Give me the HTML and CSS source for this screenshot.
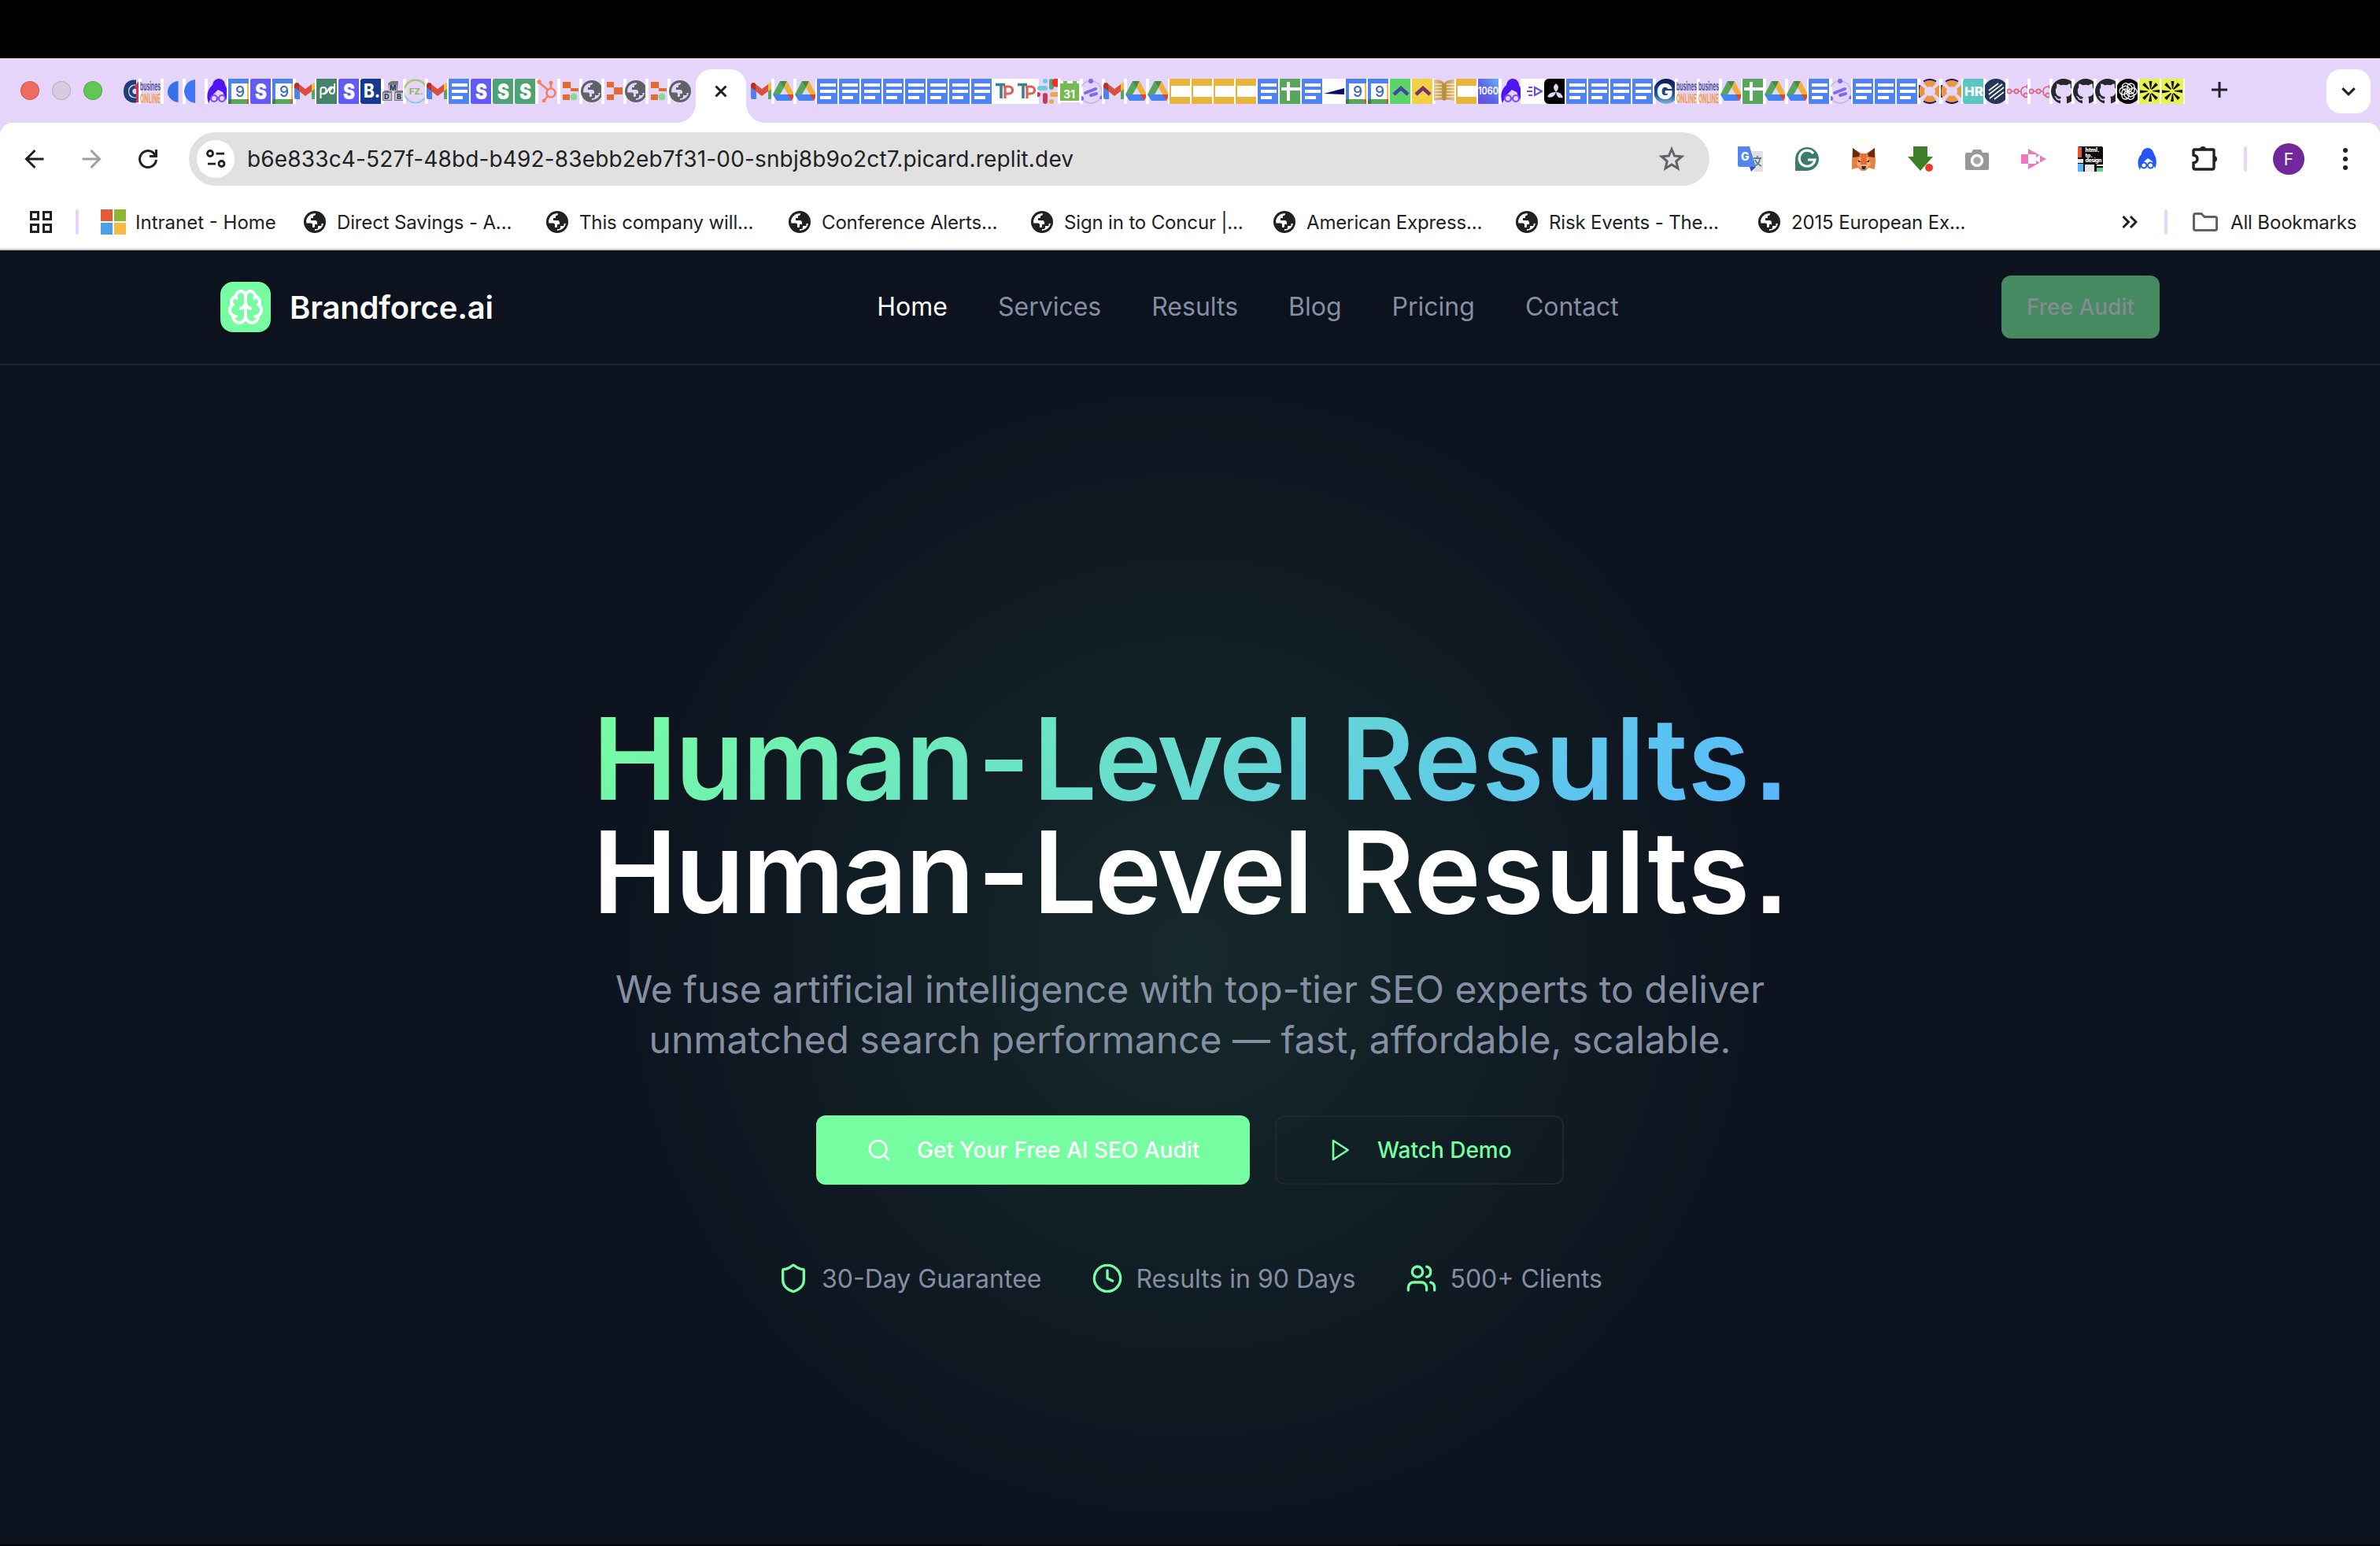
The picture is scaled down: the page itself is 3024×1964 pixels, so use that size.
FILE: index.html
```html
<!DOCTYPE html>
<html lang="en">
<head>
<meta charset="utf-8">
<title>Brandforce.ai</title>
<link rel="stylesheet" href="styles.css">
</head>
<body>
<svg class="paints" aria-hidden="true">
  <defs>
    <linearGradient id="g1060" x1="0" y1="1" x2="1" y2="0"><stop offset="0" stop-color="#6a4be0"/><stop offset=".5" stop-color="#5c68e8"/><stop offset="1" stop-color="#62b4f8"/></linearGradient>
    <linearGradient id="gGlobe" x1="0" y1="0" x2="0" y2="1"><stop offset="0" stop-color="#081c4e"/><stop offset=".6" stop-color="#1d4f93"/><stop offset="1" stop-color="#7fb6dd"/></linearGradient>
    <linearGradient id="gBook" x1="0" y1="0" x2="1" y2="0"><stop offset="0" stop-color="#e2c58e"/><stop offset=".5" stop-color="#b98a35"/><stop offset="1" stop-color="#e2c58e"/></linearGradient>
  </defs>
</svg>
<svg class="sprite" aria-hidden="true">
  <symbol id="c1" viewBox="0 0 32 32"><path d="M17 4.500h-4q-9 2-9 11.500t9 11.500h4" fill="none" stroke="#1d4078" stroke-width="6"/><path d="M18 11a5.500 5.500 0 1 0 0 10" fill="none" stroke="#1d4078" stroke-width="4"/><path d="M15 10l6-8v28h-4V14z" fill="#d8304b"/></symbol>
  <symbol id="biz" viewBox="0 0 32 32"><text x="0" y="15" font-size="15" font-weight="700" fill="#56569c" textLength="26" lengthAdjust="spacingAndGlyphs">busines</text><text x="0" y="31" font-size="16" font-weight="700" fill="#efa14d" textLength="26" lengthAdjust="spacingAndGlyphs">ONLINE</text></symbol>
  <symbol id="half" viewBox="0 0 32 32"><path d="M20.500 3v27C12 29 7 23 7 16.500S12 4 20.500 3z" fill="#3470e8"/></symbol>
  <symbol id="half2" viewBox="0 0 32 32"><path d="M14 1v30C5 30 0 23 0 16S5 2 14 1z" fill="#4075f8"/></symbol>
  <symbol id="lady" viewBox="0 0 32 32"><path d="M3 31C-1 20 3 12 8 8 9 2 13 0 16 0c5 0 8 4 8 8 3 4 4 12 1 19l-4-10-6-3-8 8z" fill="#5013f4"/><g fill="none" stroke="#7c4af5" stroke-width="2.200"><circle cx="10" cy="25" r="4"/><circle cx="20" cy="25" r="4"/></g></symbol>
  <symbol id="cal" viewBox="0 0 32 32"><path fill="#fff" d="M0 0h26v32H0z"/><path fill="#4f83ec" d="M0 0h26v6H4v20H0z"/><path fill="#f0bd42" d="M24 6h2v20h-2z"/><path fill="#58a55c" d="M4 26h20v6H4z"/><path fill="#3d7f40" d="M0 26h4v6H0z"/><path fill="#e5453a" d="M24 26h2v6h-2z"/><text x="9" y="23" font-size="19" font-weight="500" fill="#3367c8">9</text></symbol>
  <symbol id="sv" viewBox="0 0 32 32"><rect width="32" height="32" rx="2" fill="#635bf6"/><text x="6" y="26" font-size="27" font-weight="900" fill="#fff" textLength="15" lengthAdjust="spacingAndGlyphs">S</text></symbol>
  <symbol id="sg" viewBox="0 0 32 32"><rect width="32" height="32" rx="2" fill="#4fa274"/><text x="6" y="26" font-size="27" font-weight="900" fill="#fff" textLength="15" lengthAdjust="spacingAndGlyphs">S</text></symbol>
  <symbol id="gm" viewBox="0 0 32 32"><path fill="#4f83ec" d="M0 9l7 5v12H2q-2 0-2-2z"/><path fill="#58a55c" d="M22 12l8-5v17q0 2-2 2h-6z"/><path fill="#f3bc42" d="M22 12V7q6-5 8 0v3l-8 6z"/><path fill="#d9503f" d="M5 6l9 7 8-6v9l-8 6-9-7z"/><path fill="#b3312a" d="M0 8q1-5 6-2v9l-6-4z"/></symbol>
  <symbol id="pd" viewBox="0 0 32 32"><path fill="#45836a" d="M0 0h26v32H0z"/><path d="M5.500 25V14q0-3 3.500-3t3.500 3.500T9 19q3 1 5.500-4t5-4.500q3.500.500 3.500 4.500t-3 4-3-3 3-4M23 15V6" fill="none" stroke="#fff" stroke-width="2"/></symbol>
  <symbol id="bk" viewBox="0 0 32 32"><rect width="30" height="32" rx="3" fill="#17388f"/><text x="4" y="24" font-size="24" font-weight="800" fill="#fff" textLength="21" lengthAdjust="spacingAndGlyphs">B.</text></symbol>
  <symbol id="mdb" viewBox="0 0 32 32"><path fill="#777" d="M7 6l4-3h9l-1 12H8zM0 17l3-2h9v13H0zM15 17l3-2h9v13H15z"/><path fill="#c4c4c4" d="M8 8h10v8H8zM1 18h10v9H1zM16 18h10v9H16z"/><g font-size="9" font-weight="800" fill="#24386e"><text x="9" y="15">M</text><text x="2" y="26">D</text><text x="18" y="26">B</text></g></symbol>
  <symbol id="fz" viewBox="0 0 32 32"><circle cx="14" cy="16" r="14.500" fill="none" stroke="#8fcbd0" stroke-width="2"/><path d="M0 12A14.500 14.500 0 0 1 27 10" fill="none" stroke="#a9cc55" stroke-width="2"/><text x="6" y="20" font-size="11" font-weight="700" fill="#88b83e">FZ.</text></symbol>
  <symbol id="doc" viewBox="0 0 32 32"><rect width="32" height="32" rx="1" fill="#5083ec"/><path d="M4 6h20v4H4zM4 14h20v4H4zM4 22h14v4H4z" fill="#fff"/></symbol>
  <symbol id="hub" viewBox="0 0 32 32"><g fill="none" stroke="#f08262" stroke-width="2.600"><circle cx="18" cy="18" r="5.500"/><path d="M18 12V5M14 14L3 5M14 22l-5 6"/></g><g fill="#f08262"><circle cx="18" cy="5" r="2.500"/><circle cx="3" cy="4" r="2.800"/><circle cx="9" cy="28" r="2.400"/></g></symbol>
  <symbol id="rp" viewBox="0 0 32 32"><path fill="#e66a30" d="M5 4h10v8h10v4H15v-4H5zM5 20h9v7H5z"/><circle cx="19" cy="23" r="4.500" fill="#86dc90"/></symbol>
  <symbol id="rp2" viewBox="0 0 32 32"><path fill="#e66a30" d="M5 4h9v7h11v9H14v7H5v-7h9v-9H5z"/></symbol>
  <symbol id="globe" viewBox="0 0 28 28"><circle cx="14" cy="14" r="14" fill="currentColor"/><path d="M3.100 12.500C4 7 8.500 3.200 15 3.100 15 5.500 14 6 12 6.200V9H9v3h5q3 0 3 3v2h-3v3q0 1-1.500 1H11v-3.500q0-2-2-2H3.300zM14 24.900v-2h2q2 0 2-2v-2h4.500v-3h2.400Q24 23.500 14 24.900z" fill="var(--hole,#fff)"/></symbol>
  <symbol id="globeTab" viewBox="0 0 28 32"><use href="#globe" y="2" width="28" height="28"/></symbol>
  <symbol id="dr" viewBox="0 0 32 32"><path fill="#58a55c" d="M9 3L0 20l5 7L18 8z"/><path fill="#458a48" d="M9 3h9l-4 8z"/><path fill="#f0b13a" d="M18 3l9 17H19L14 11z"/><path fill="#4384f3" d="M0 20h20l4 8H5z"/><path fill="#e0462f" d="M19 20h9l-4 8z"/><path fill="#e5d5fb" d="M14 11.500L19 20H9z"/></symbol>
  <symbol id="tp" viewBox="0 0 32 32"><path fill="#fff" d="M0 0h32v32H0z"/><path d="M3 7.500h12M10 8v17" fill="none" stroke="#3c8189" stroke-width="3.600"/><path d="M13 10h7a4 4 0 0 1 0 9h-4M15 10v15" fill="none" stroke="#d9635b" stroke-width="3.200"/></symbol>
  <symbol id="sl" viewBox="0 0 32 32"><g stroke-width="6" stroke-linecap="round"><path d="M10 3v0M3 12h7" stroke="#6ecadc"/><path d="M18 3v8" stroke="#52a679"/><path d="M0 20h1M10 21v8" stroke="#cf375a"/><path d="M19 20h6M18 29v0" stroke="#e1ad45"/></g><circle cx="24" cy="5" r="5.500" fill="#ea3323"/></symbol>
  <symbol id="c31" viewBox="0 0 32 32"><rect x="-1" y="3" width="30" height="27" rx="2" fill="#fff"/><path fill="#73bb52" d="M1 6h24v22H1zM5 3h5v8H5zM17 3h5v8h-5z"/><text x="5" y="25" font-size="14" font-weight="700" fill="#fff">31</text></symbol>
  <symbol id="orb" viewBox="0 0 32 32"><circle cx="12" cy="17" r="14" fill="none" stroke="#c5b6f0" stroke-width="1.500"/><g stroke="#7a6bf0" stroke-width="4" stroke-linecap="round"><path d="M5 18l13-5M12 21l7-2"/></g><g fill="#7a6bf0"><circle cx="12" cy="3" r="3"/><circle cx="0" cy="25" r="3"/><circle cx="26" cy="24" r="2.500"/></g></symbol>
  <symbol id="sd" viewBox="0 0 32 32"><rect width="32" height="32" rx="1" fill="#e8b43c"/><path d="M2 9h28v14H2z" fill="#fff"/></symbol>
  <symbol id="sh" viewBox="0 0 32 32"><rect width="32" height="32" rx="1" fill="#58a55c"/><path d="M2 11h24v4H2zM9 4h4v24H9z" fill="#fff"/></symbol>
  <symbol id="wd" viewBox="0 0 32 32"><path fill="#fff" d="M-1 0h33v32H-1z"/><path d="M0 19L26 12v8z" fill="#080a62"/></symbol>
  <symbol id="cg" viewBox="0 0 32 32"><rect width="32" height="32" rx="1" fill="#5dd467"/><path d="M5 20l9-8 9 8" fill="none" stroke="#46459c" stroke-width="4.500"/></symbol>
  <symbol id="cy" viewBox="0 0 32 32"><rect width="32" height="32" rx="1" fill="#f0d145"/><path d="M5 20l9-8 9 8" fill="none" stroke="#7a2e72" stroke-width="4.500"/></symbol>
  <symbol id="bo" viewBox="0 0 32 32"><path d="M0 1q10 0 13 5 3-5 13-5v27q-10-3-13 0-3-3-13 0z" fill="url(#gBook)"/><path d="M1 7h9M1 11h9M1 15h9M1 19h9M1 23h9M16 7h10M16 11h10M16 15h10M16 19h10M16 23h10" stroke="#f4e6c8" stroke-width="1.500"/></symbol>
  <symbol id="t60" viewBox="0 0 32 32"><path fill="url(#g1060)" d="M0 0h26v32H0z"/><text x="0" y="20" font-size="13" font-weight="600" fill="#fff" textLength="26" lengthAdjust="spacingAndGlyphs">1060</text></symbol>
  <symbol id="dt" viewBox="0 0 32 32"><path fill="#fff" d="M-2 0h32v32H-2z"/><path d="M16 11l9 5-9 5zM8 11h5M6 16h7M8 21h5" fill="none" stroke="#6a4df0" stroke-width="2.200"/></symbol>
  <symbol id="fan" viewBox="0 0 32 32"><rect width="32" height="32" rx="6" fill="#000"/><g fill="#e5d5fb"><path d="M15 17Q9 11 15 6q6 5 0 11z"/><path d="M15 17q7 0 9 7-8 2-9-7zM15 17q-8-1-11 6 8 3 11-6z"/></g></symbol>
  <symbol id="gg" viewBox="0 0 32 32"><circle cx="15" cy="16" r="16" fill="url(#gGlobe)"/><text x="3" y="26" font-size="27" font-weight="900" fill="#fff">G</text></symbol>
  <symbol id="lb" viewBox="0 0 32 32"><path d="M6 5q8-7 16 0l-5 6q-3-2-6 0zM6 27q8 7 16 0l-5-6q-3 2-6 0zM2 8q-5 8 0 16l6-5q-2-3 0-6zM26 8q5 8 0 16l-6-5q2-3 0-6z" fill="#e8973e"/><path d="M6 3.500q8-5 16 0M6 28.500q8 5 16 0M1 8q-3 8 0 16" fill="none" stroke="#1c1360" stroke-width="2"/></symbol>
  <symbol id="hr" viewBox="0 0 32 32"><rect width="32" height="32" rx="3" fill="#5cc6c4"/><text x="2" y="22" font-size="16" font-weight="800" fill="#fff" textLength="24" lengthAdjust="spacingAndGlyphs">HR</text></symbol>
  <symbol id="nv" viewBox="0 0 32 32"><circle cx="14" cy="16" r="16" fill="#263656"/><path d="M5 15L17 6M5 20L22 7M6 25L24 11M12 26l12-9" stroke="#fff" stroke-width="1.600"/></symbol>
  <symbol id="pk" viewBox="0 0 32 32"><g fill="none" stroke="#e0607f" stroke-width="1.600"><circle cx="3" cy="16" r="2.600"/><circle cx="12" cy="16" r="2.600"/><path d="M6 16h3M15 16h3q0-6 7-6M18 16q0 6 4 6"/><circle cx="24" cy="21" r="2.600"/><circle cx="28" cy="10" r="2.600"/></g></symbol>
  <symbol id="gh" viewBox="0 0 16 16"><path fill="#24292e" d="M8 0C3.580 0 0 3.580 0 8c0 3.540 2.290 6.530 5.470 7.590.4.070.55-.17.55-.38 0-.19-.01-.82-.01-1.490-2.010.37-2.530-.49-2.690-.94-.09-.23-.48-.94-.82-1.130-.28-.15-.68-.52-.01-.53.63-.01 1.080.58 1.230.82.72 1.210 1.870.87 2.330.66.07-.52.28-.87.51-1.070-1.780-.2-3.640-.89-3.640-3.950 0-.87.31-1.590.82-2.150-.08-.2-.36-1.020.08-2.120 0 0 .67-.21 2.200.82.64-.18 1.320-.27 2-.27s1.360.09 2 .27c1.530-1.040 2.200-.82 2.200-.82.44 1.100.16 1.920.08 2.120.51.56.82 1.270.82 2.150 0 3.070-1.870 3.750-3.650 3.950.29.25.54.73.54 1.480 0 1.070-.01 1.930-.01 2.200 0 .21.15.46.55.38A8.010 8.010 0 0 0 16 8c0-4.420-3.580-8-8-8z"/></symbol>
  <symbol id="ai" viewBox="0 0 32 32"><circle cx="14" cy="16" r="16" fill="#000"/><g fill="none" stroke="#fff" stroke-width="1.400"><rect x="13" y="6" width="9" height="13" rx="4.500"/><rect x="13" y="6" width="9" height="13" rx="4.500" transform="rotate(60 14 16)"/><rect x="13" y="6" width="9" height="13" rx="4.500" transform="rotate(120 14 16)"/><rect x="13" y="6" width="9" height="13" rx="4.500" transform="rotate(180 14 16)"/><rect x="13" y="6" width="9" height="13" rx="4.500" transform="rotate(240 14 16)"/><rect x="13" y="6" width="9" height="13" rx="4.500" transform="rotate(300 14 16)"/></g></symbol>
  <symbol id="yl" viewBox="0 0 32 32"><path fill="#e9f24d" d="M0 0h28v32H0z"/><path d="M12.500 3h4l-1.500 10h-1zM12 29h4l-1-10h-1zM1 14.500v4l10-2v-1zM27 14v4l-10-2v-1zM4 8l3-3 6 8-1 1zM21 5l3 3-8 6-1-1zM4 24l3 3 6-8-1-1zM21 27l3-3-8-6-1 1z" fill="#111"/></symbol>
</svg>

<div class="menubar"></div>
<div class="tabstrip">
  <div class="lights"><i class="light light--red"></i><i class="light light--idle"></i><i class="light light--green"></i></div>
  <div class="favs favs--left" data-icons="c1 biz half half2 lady cal sv cal gm pd sv bk mdb fz gm doc sv sg sg hub rp globeTab rp2 globeTab rp globeTab"></div>
  <div class="tab"><svg class="tab__close" viewBox="0 0 16 16"><path d="M1.500 1.500l13 13M14.500 1.500l-13 13"/></svg></div>
  <div class="favs favs--right" data-icons="gm dr dr doc doc doc doc doc doc doc doc tp tp sl c31 orb gm dr dr sd sd sd sd doc sh doc wd cal cal cg cy bo sd t60 lady dt fan doc doc doc doc gg biz biz dr sh dr dr doc orb doc doc doc lb lb hr nv pk pk gh gh gh ai yl yl"></div>
  <svg class="newtab" viewBox="0 0 20 20"><path d="M10 0v20M0 10h20"/></svg>
  <div class="tabmenu"><svg viewBox="0 0 16 10"><path d="M1 1l7 7 7-7"/></svg></div>
</div>

<div class="chrome">
  <div class="toolbar">
    <div class="navicons">
      <svg viewBox="0 0 24 24"><path d="M23.500 12H2M12.500 1L1.500 12l11 11"/></svg>
      <svg class="navicons__off" viewBox="0 0 24 24"><path d="M.500 12H22M11.500 1l11 11-11 11"/></svg>
      <svg viewBox="0 0 24 24"><path d="M22.500 13A10.500 10.500 0 1 1 19 4.200l2.500 3"/><path d="M22.500 0v8.500H14"/></svg>
    </div>
    <div class="omnibox">
      <span class="omnibox__site"><svg viewBox="0 0 24 24"><circle cx="5" cy="5" r="3.500"/><path d="M12.500 5.200H23M2 18.200h10"/><circle cx="19.500" cy="18" r="3.500"/></svg></span>
      <span class="omnibox__url">b6e833c4-527f-48bd-b492-83ebb2eb7f31-00-snbj8b9o2ct7.picard.replit.dev</span>
      <svg class="omnibox__star" viewBox="0 0 30 30"><path d="M15 4l3.200 7.500 8.100.7-6.200 5.300 1.900 8-7-4.300-7 4.300 1.900-8-6.200-5.300 8.100-.7z"/></svg>
    </div>
    <div class="exts">
      <svg viewBox="0 0 32 32"><path fill="#e0e0e0" d="M18 6h14v26H21z"/><path fill="#5286ec" d="M1 0h14l8 26H2q-2 0-2-2V1q0-1 1-1z"/><path fill="#2d4fb5" d="M15 26h8l-6 6z"/><text x="4" y="18" font-size="14" font-weight="800" fill="#fff">G</text><path d="M20 15h10M25 12v3M21 25q7-3 7-10M22 17q2 5 8 8" stroke="#5d7f8a" stroke-width="1.800" fill="none"/></svg>
      <svg viewBox="0 0 32 32"><path fill="#3b7d6d" d="M1 31V16A15 15 0 1 1 16 31z"/><path d="M24 9a10 10 0 1 0 2 8h-9" fill="none" stroke="#fff" stroke-width="3.200"/></svg>
      <svg viewBox="0 0 32 32"><path fill="#ee7d40" d="M2 2l11 7h6l11-7 1 16-1 11-8-2-4 4h-5l-4-4-8 2L1 18z"/><path fill="#6b2a10" d="M2 2l9 7-1 4-8 1zM30 2l-9 7 1 4 8 1z"/><path fill="#f6ad7c" d="M10 14h12l3 9-7 6h-4l-7-6z"/><path fill="#ea6b33" d="M13 9h6l1 14h-8z"/><path fill="#2a2f38" d="M13 25h6l-1 4h-4zM9 17l4 3H9zM23 17l-4 3h4z"/></svg>
      <svg viewBox="0 0 32 32"><path fill="#3e7f27" d="M7 0h18v13h7L16 31 0 13h7z"/><circle cx="27" cy="27" r="5" fill="#ea3a2a"/></svg>
      <svg viewBox="0 0 32 32"><path fill="#989898" d="M2 8h7l2-4h10l2 4h6q2 0 2 2v18q0 2-2 2H3q-2 0-2-2V10z"/><circle cx="16" cy="18" r="6.500" fill="#a6a6a6" stroke="#fff" stroke-width="3.500"/></svg>
      <svg viewBox="0 0 32 32"><path fill="#ee76bd" d="M0 10h9V3l23 13L9 29v-7H0z"/><path fill="#fff" d="M9 10h10v4l5-3v10l-5-3v4H9z"/></svg>
      <svg viewBox="0 0 32 32"><rect width="32" height="32" rx="2" fill="#0b0b0b"/><path fill="#e4572f" d="M0 1h5v13H0z"/><path fill="#e6e6e6" d="M0 16h7v5H0zM9 23h12v9H9z"/><path fill="#5ab8f7" d="M0 22h7v10H0z"/><path fill="#62cf8c" d="M24 27h8v5h-8z"/><path fill="#e6e6e6" d="M24 23h8v2h-8z"/><g font-size="7" font-weight="800" fill="#fff"><text x="9.500" y="7">html.</text><text x="9.500" y="13.500">to.</text><text x="9.500" y="20" textLength="21">design</text></g></svg>
      <svg viewBox="0 0 32 32"><path d="M7 30C3 23 4 14 9 10c0-5 4-8 8-8s7 3 8 8c3 4 4 12 1 18l-3-9-6-4-8 7z" fill="#2456f5"/><g fill="none" stroke="#2456f5" stroke-width="2"><circle cx="12" cy="24" r="3.500"/><circle cx="20.500" cy="24" r="3.500"/></g></svg>
      <svg class="exts__puzzle" viewBox="0 0 32 32"><path d="M3 4h24q1 0 1 1v22q0 2-2 2H4q-2 0-2-2v-6q5-1 5-5t-5-5V5z" fill="none" stroke="currentColor" stroke-width="3.400"/><path d="M10 4a4 4 0 0 1 8 0zM28 12a4 4 0 0 1 0 8z" fill="currentColor"/></svg>
    </div>
    <i class="rule rule--bar"></i>
    <span class="avatar">F</span>
    <svg class="dots" viewBox="0 0 6 28"><circle cx="3" cy="3" r="3"/><circle cx="3" cy="14" r="3"/><circle cx="3" cy="25" r="3"/></svg>
  </div>
  <div class="bookmarks">
    <svg class="apps" viewBox="0 0 28 28"><path d="M1.500 1.500h9v9h-9zM17.500 1.500h9v9h-9zM1.500 17.500h9v9h-9zM17.500 17.500h9v9h-9z"/></svg>
    <i class="rule"></i>
    <div class="bm bm--first"><svg class="bm__ms" viewBox="0 0 32 32"><path fill="#e15c34" d="M0 0h15v15H0z"/><path fill="#8cb734" d="M17 0h15v15H17z"/><path fill="#4aa1ea" d="M0 17h15v15H0z"/><path fill="#f6bb42" d="M17 17h15v15H17z"/></svg><span>Intranet - Home</span></div>
    <div class="bm"><svg><use href="#globe"/></svg><span>Direct Savings - A...</span></div>
    <div class="bm"><svg><use href="#globe"/></svg><span>This company will...</span></div>
    <div class="bm"><svg><use href="#globe"/></svg><span>Conference Alerts...</span></div>
    <div class="bm"><svg><use href="#globe"/></svg><span>Sign in to Concur |...</span></div>
    <div class="bm"><svg><use href="#globe"/></svg><span>American Express...</span></div>
    <div class="bm"><svg><use href="#globe"/></svg><span>Risk Events - The...</span></div>
    <div class="bm"><svg><use href="#globe"/></svg><span>2015 European Ex...</span></div>
    <svg class="more" viewBox="0 0 20 16"><path d="M1.500 1l7 7-7 7M11 1l7 7-7 7"/></svg>
    <i class="rule rule--all"></i>
    <svg class="folder" viewBox="0 0 32 24"><path d="M3.500 1.500H11l4 4h13.500q2 0 2 2V20.500q0 2-2 2h-25q-2 0-2-2v-17q0-2 2-2z"/></svg>
    <span class="all">All Bookmarks</span>
  </div>
</div>

<div class="site">
  <header class="header">
    <a class="brand">
      <span class="brand__mark"><svg viewBox="0 0 24 24"><path d="M12 5a3 3 0 1 0-5.997.125 4 4 0 0 0-2.526 5.770 4 4 0 0 0 .556 6.588A4 4 0 1 0 12 18Z"/><path d="M12 5a3 3 0 1 1 5.997.125 4 4 0 0 1 2.526 5.770 4 4 0 0 1-.556 6.588A4 4 0 1 1 12 18Z"/><path d="M15 13a4.500 4.500 0 0 1-3-4 4.500 4.500 0 0 1-3 4"/><path d="M17.599 6.500a3 3 0 0 0 .399-1.375M6.003 5.125A3 3 0 0 0 6.401 6.500M3.477 10.896a4 4 0 0 1 .585-.396M19.938 10.500a4 4 0 0 1 .585.396M6 18a4 4 0 0 1-1.967-.516M19.967 17.484A4 4 0 0 1 18 18"/></svg></span>
      <span class="brand__name">Brandforce.ai</span>
    </a>
    <nav class="nav"><a class="nav__on">Home</a><a>Services</a><a>Results</a><a>Blog</a><a>Pricing</a><a>Contact</a></nav>
    <a class="audit">Free Audit</a>
  </header>
  <main class="hero">
    <h1 class="title">
      <span class="title__line title__line--grad"><span class="w-human">Human</span><span class="w-dash">-</span><span class="w-level">Level</span> <span class="w-results">Results</span><span class="w-stop">.</span></span>
      <span class="title__line"><span class="w-human">Human</span><span class="w-dash">-</span><span class="w-level">Level</span> <span class="w-results">Results</span><span class="w-stop">.</span></span>
    </h1>
    <p class="lead">We fuse artificial intelligence with top-tier SEO experts to deliver<br>unmatched search performance — fast, affordable, scalable.</p>
    <div class="cta">
      <a class="btn btn--main"><svg viewBox="0 0 24 24"><circle cx="11" cy="11" r="8"/><path d="M21 21l-4.300-4.300"/></svg><span>Get Your Free AI SEO Audit</span></a>
      <a class="btn btn--ghost"><svg viewBox="0 0 24 24"><path d="M6 3l14 9-14 9z"/></svg><span>Watch Demo</span></a>
    </div>
    <div class="facts">
      <span class="fact"><svg viewBox="0 0 24 24"><path d="M20 13c0 5-3.500 7.500-7.660 8.950a1 1 0 0 1-.67-.01C7.500 20.500 4 18 4 13V6a1 1 0 0 1 1-1c2 0 4.500-1.200 6.240-2.720a1.170 1.170 0 0 1 1.520 0C14.510 3.810 17 5 19 5a1 1 0 0 1 1 1z"/></svg>30-Day Guarantee</span>
      <span class="fact"><svg viewBox="0 0 24 24"><circle cx="12" cy="12" r="10"/><path d="M12 6v6l4 2"/></svg>Results in 90 Days</span>
      <span class="fact"><svg viewBox="0 0 24 24"><path d="M16 21v-2a4 4 0 0 0-4-4H6a4 4 0 0 0-4 4v2"/><circle cx="9" cy="7" r="4"/><path d="M22 21v-2a4 4 0 0 0-3-3.870M16 3.130a4 4 0 0 1 0 7.750"/></svg>500+ Clients</span>
    </div>
  </main>
</div>
<script src="tabs.js"></script>
</body>
</html>
```
FILE: tabs.js
```js
// Fill each group of pinched tabs with its favicons, clipped to the tab width.
document.querySelectorAll('.favs').forEach(function (group) {
  var names = group.dataset.icons.split(' ');
  var left = group.classList.contains('favs--left');
  group.innerHTML = names.map(function (name, i) {
    var cls = 'fav';
    var w = 26;
    if (i === 0) {
      cls += left ? ' fav--first' : ' fav--start';
      if (left) w = 20;
    }
    if (i === names.length - 1) { cls += ' fav--last'; w = 28; }
    if (name === 'globeTab') cls += ' fav--globe';
    if (name === 'tp' || name === 'wd' || name === 'dt') cls += ' fav--white';
    var size = name === 'globeTab' ? 28 : 32;
    return '<svg class="' + cls + '" viewBox="0 0 ' + w + ' 32"><use href="#' + name + '" width="' + size + '" height="32"/></svg>';
  }).join('');
});
```
FILE: styles.css
```css
* { box-sizing: border-box; }
html, body { margin: 0; }
body {
  width: 3024px; height: 1964px; overflow: hidden;
  display: flex; flex-direction: column;
  background: #06080f; color: #202124;
  font-family: Inter, "Liberation Sans", sans-serif;
}
svg { display: block; flex: none; }
.paints { position: absolute; width: 0; height: 0; }
.sprite { display: none; }

/* window chrome */
.menubar { height: 74px; flex: none; background: #000; }
.tabstrip { height: 82px; flex: none; display: flex; align-items: flex-start; background: #e5d5fb; }
.lights { display: flex; gap: 16px; padding: 29px 0 0 26px; width: 156px; flex: none; }
.light { width: 24px; height: 24px; border-radius: 50%; border: 1px solid rgba(0,0,0,.14); }
.light--red { background: #ed6b60; }
.light--idle { background: #d6cbe0; }
.light--green { background: #62c655; }
.favs {
  display: flex; gap: 2px; margin-top: 26px; height: 32px; flex: none;
  background: linear-gradient(90deg, #fff 4px, transparent 4px) 26px 0 / 28px 32px;
}
.favs--left { width: 718px; background-position-x: 20px; }
.favs--right { width: 1822px; margin-left: 6px; }
.fav { width: 26px; height: 32px; }
.fav--first { width: 20px; }
.fav--last { width: 28px; }
.fav--start { background: #e5d5fb; }
.fav--white { box-shadow: 2px 0 #fff; }
.fav--globe { color: #5f6368; --hole: #e5d5fb; }
.tab {
  position: relative; width: 64px; height: 68px; margin: 14px 0 0 10px; flex: none;
  background: #fff; border-radius: 20px 20px 0 0;
  display: flex; justify-content: center; padding-top: 20px;
}
.tab::before, .tab::after { content: ""; position: absolute; bottom: 0; width: 24px; height: 24px; }
.tab::before { right: 100%; background: radial-gradient(circle at 0 0, transparent 23.5px, #fff 24px); }
.tab::after { left: 100%; background: radial-gradient(circle at 100% 0, transparent 23.5px, #fff 24px); }
.tab__close { width: 16px; height: 16px; fill: none; stroke: #202124; stroke-width: 3; }
.newtab { width: 20px; height: 20px; margin: 30px 0 0 34px; fill: none; stroke: #202124; stroke-width: 3; }
.tabmenu {
  width: 56px; height: 56px; margin: 14px 12px 0 auto; border-radius: 18px; background: #fff;
  display: flex; align-items: center; justify-content: center;
}
.tabmenu svg { width: 18px; height: 11px; fill: none; stroke: #202124; stroke-width: 2.8; }
.chrome { height: 162px; flex: none; background: linear-gradient(#e5d5fb 20px, #fff 20px); }
.toolbar {
  height: 92px; display: flex; align-items: center; background: #fff; border-radius: 16px 16px 0 0;
}
.navicons { display: flex; gap: 48px; padding-left: 32px; width: 240px; }
.navicons svg { width: 24px; height: 24px; fill: none; stroke: #202124; stroke-width: 3; overflow: visible; }
.navicons .navicons__off { stroke: #a0a0a0; }
.omnibox { width: 1932px; height: 68px; border-radius: 34px; background: #e1e1e1; display: flex; align-items: center; }
.omnibox__site { width: 48px; height: 48px; border-radius: 50%; background: #fff; margin-left: 10px; display: flex; align-items: center; justify-content: center; }
.omnibox__site svg { width: 24px; height: 24px; fill: none; stroke: #202124; stroke-width: 2.8; overflow: visible; }
.omnibox__url { margin-left: 16px; font-size: 28px; letter-spacing: .15px; white-space: nowrap; }
.omnibox__star { width: 34px; height: 34px; margin: 0 31px 0 auto; fill: none; stroke: #5f6368; stroke-width: 2.6; }
.exts { display: flex; gap: 40px; margin-left: 36px; }
.exts svg { width: 32px; height: 32px; overflow: visible; }
.exts .exts__puzzle { margin-left: 1px; }
.rule { width: 4px; height: 32px; border-radius: 2px; background: #e5d5fb; flex: none; margin-left: 30px; }
.rule--bar { margin-left: 34px; }
.avatar { width: 40px; height: 40px; margin-left: 33px; border-radius: 50%; background: #72279b; color: #fff; font-size: 21px; display: flex; align-items: center; justify-content: center; }
.dots { width: 6px; height: 28px; margin-left: 49px; fill: #202124; }
.bookmarks { height: 70px; display: flex; align-items: center; background: #fff; border-bottom: 2px solid #c9cfcc; font-size: 24px; letter-spacing: -.15px; padding-left: 38px; white-space: nowrap; }
.apps { width: 28px; height: 28px; fill: none; stroke: #202124; stroke-width: 3; }
.bm { width: 308px; flex: none; display: flex; align-items: center; gap: 14px; }
.bm svg { width: 28px; height: 28px; }
.bm--first { width: 258px; margin-left: 28px; gap: 12px; letter-spacing: 0; }
.bm .bm__ms { width: 32px; height: 32px; }
.more { width: 20px; height: 16px; margin-left: 154px; fill: none; stroke: #202124; stroke-width: 3; }
.rule--all { margin-left: 34px; }
.folder { width: 32px; height: 24px; margin-left: 32px; fill: none; stroke: #5f6368; stroke-width: 3; }
.all { margin-left: 16px; }

/* site */
.site { height: 1644px; flex: none; background: #0c121e; display: flex; flex-direction: column; }
.header {
  height: 146px; flex: none; padding: 0 280px; border-bottom: 2px solid #1e2736;
  display: flex; align-items: center; justify-content: space-between;
}
.brand { display: flex; align-items: center; gap: 24px; }
.brand__mark { width: 64px; height: 64px; border-radius: 16px; background: #77fda1; display: flex; align-items: center; justify-content: center; }
.brand__mark svg { width: 48px; height: 48px; fill: none; stroke: #fff; stroke-width: 2; stroke-linecap: round; stroke-linejoin: round; }
.brand__name { color: #fff; font-size: 40px; font-weight: 600; letter-spacing: -.2px; width: 260px; white-space: nowrap; }
.nav { display: flex; gap: 64px; padding-bottom: 1px; font-size: 32px; color: #858ea2; }
.nav__on { color: #fff; }
.audit { width: 201px; height: 80px; border-radius: 12px; background: #458a60; color: #868a94; font-size: 28px; font-weight: 500; display: flex; align-items: center; justify-content: center; }
.hero {
  flex: 1; display: flex; flex-direction: column; align-items: center; padding-top: 428px;
  background: radial-gradient(circle 800px at 50% 50%, #16292b, #0c121e);
}
.title { margin: 0; display: flex; flex-direction: column; font-size: 144px; line-height: 144px; font-weight: 600; letter-spacing: .3px; word-spacing: 1px; color: #fff; white-space: nowrap; }
.title__line { display: block; height: 144px; }
.title__line--grad { background: linear-gradient(135deg, #77fda1, #57b8ff); -webkit-background-clip: text; background-clip: text; color: transparent; }
.w-human { letter-spacing: -2.6px; }
.w-dash { margin: 0 3px 0 6px; }
.w-level { letter-spacing: -3.1px; }
.w-results { letter-spacing: 1.2px; }
.w-stop { margin-left: 6px; font-family: "Liberation Sans", sans-serif; font-weight: 700; line-height: 1; }
.lead { margin: 45px 0 0; font-size: 48px; line-height: 64px; color: #858ea2; text-align: center; white-space: nowrap; }
.cta { display: flex; gap: 32px; margin-top: 64px; }
.btn { height: 88px; border-radius: 12px; display: flex; align-items: center; gap: 32px; padding-left: 64px; font-size: 28px; font-weight: 500; white-space: nowrap; }
.btn svg { width: 32px; height: 32px; fill: none; stroke: currentColor; stroke-width: 2; stroke-linejoin: round; stroke-linecap: round; }
.btn--main { width: 551px; background: #77fda1; color: #fff; }
.btn--ghost { width: 367px; border: 2px solid #20262f; color: #77fda1; }
.facts { display: flex; gap: 64px; margin-top: 95px; font-size: 32px; color: #858ea2; }
.fact { display: flex; align-items: center; gap: 16px; height: 48px; white-space: nowrap; }
.fact svg { width: 40px; height: 40px; fill: none; stroke: #77fda1; stroke-width: 2; stroke-linecap: round; stroke-linejoin: round; }
```
